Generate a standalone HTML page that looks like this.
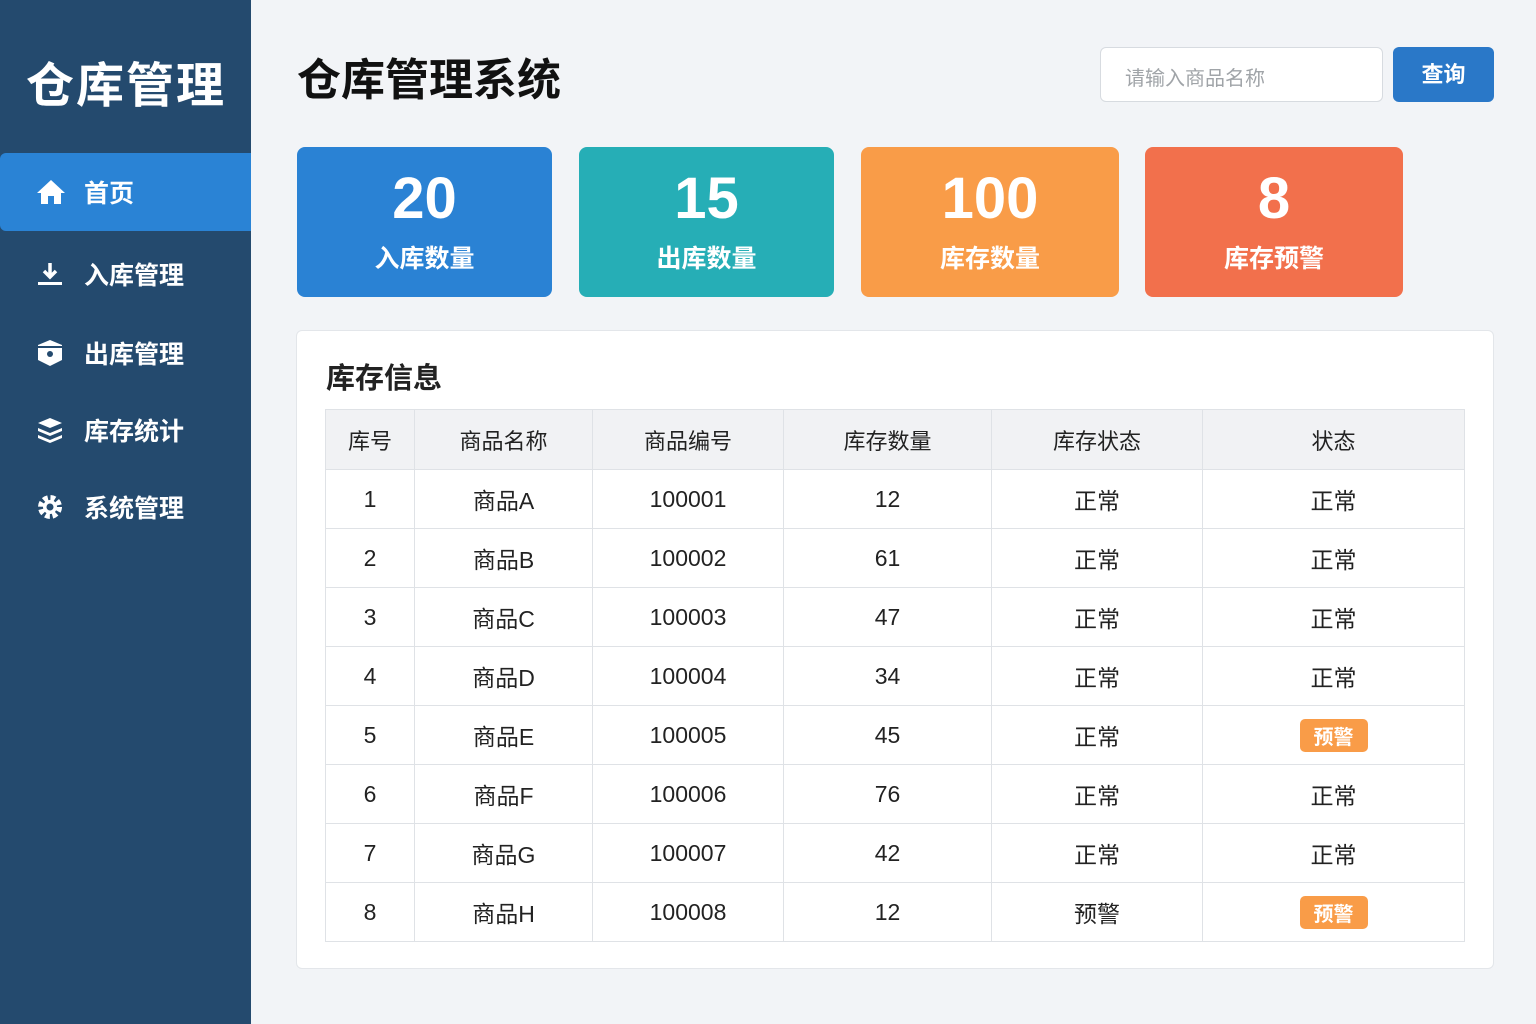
<!DOCTYPE html>
<html><head><meta charset="utf-8"><style>
*{margin:0;padding:0;box-sizing:border-box}
body{width:1536px;height:1024px;background:#f2f4f7;font-family:"Liberation Sans","Noto Sans CJK SC",sans-serif;position:relative;overflow:hidden;color:#222}
.side{position:absolute;left:0;top:0;width:251px;height:1024px;background:#244a6e}
.logo{position:absolute;left:26px;top:46px;font-size:48px;font-weight:bold;color:#fff;letter-spacing:2px}
.nav{position:absolute;left:0;width:251px;height:78px;display:flex;align-items:center;color:#fff;font-size:25px;font-weight:bold}
.nav svg{position:absolute;left:36px}
.nav span{position:absolute;left:84px}
.act{background:#2a83d5;border-radius:6px 0 0 6px}
h1{position:absolute;left:297px;top:44px;font-size:44px;font-weight:bold;color:#111}
.search{position:absolute;left:1100px;top:47px;width:283px;height:55px;background:#fff;border:1px solid #d7dbe0;border-radius:6px;color:#a0a4a8;font-size:20px;padding:14px 0 0 24px}
.btn{position:absolute;left:1393px;top:47px;width:101px;height:55px;background:#2a78c8;border-radius:6px;color:#fff;font-size:22px;font-weight:bold;text-align:center;line-height:55px}
.card{position:absolute;top:147px;height:150px;border-radius:8px;color:#fff;text-align:center}
.card b{display:block;font-size:58px;line-height:60px;margin-top:22px}
.card i{display:block;font-style:normal;font-size:25px;margin-top:10px;font-weight:bold}
.panel{position:absolute;left:296px;top:330px;width:1198px;height:639px;background:#fff;border:1px solid #e3e6ea;border-radius:6px}
.panel h2{position:absolute;left:29px;top:24px;font-size:29px;font-weight:bold}
table{position:absolute;left:325px;top:409px;border-collapse:collapse;font-size:23px}
td,th{border:1px solid #dfe2e6;text-align:center;height:59px;font-weight:normal}
th{background:#f1f2f4;height:60px;font-size:22px}
.tag{display:inline-block;background:#f99c48;color:#fff;border-radius:5px;padding:2px 14px;font-size:20px;font-weight:bold}
</style></head><body>
<div class="side">
<div class="logo">仓库管理</div>
<div class="nav act" style="top:153px"><svg width="30" height="28" viewBox="0 0 30 28"><path d="M15 2L1 15h4v11h7v-8h6v8h7V15h4z" fill="#fff"/></svg><span>首页</span></div>
<div class="nav" style="top:235px"><svg width="28" height="28" viewBox="0 0 28 28"><path d="M14 3v14M8 11l6 6 6-6" stroke="#fff" stroke-width="3.5" fill="none"/><rect x="2" y="22" width="24" height="3" fill="#fff"/></svg><span>入库管理</span></div>
<div class="nav" style="top:314px"><svg width="28" height="28" viewBox="0 0 28 28"><path d="M14 1L2 6v15l12 6 12-6V6z" fill="#fff"/><path d="M2 8h24" stroke="#244a6e" stroke-width="2"/><circle cx="14" cy="15" r="3" fill="#244a6e"/></svg><span>出库管理</span></div>
<div class="nav" style="top:391px"><svg width="28" height="28" viewBox="0 0 28 28"><path d="M14 2L2 7l12 5 12-5z M2 12l12 5 12-5v3l-12 5-12-5z M2 19l12 5 12-5v3l-12 5-12-5z" fill="#fff"/></svg><span>库存统计</span></div>
<div class="nav" style="top:468px"><svg width="28" height="28" viewBox="0 0 28 28"><circle cx="14" cy="14" r="9" fill="none" stroke="#fff" stroke-width="6" stroke-dasharray="4.5 2.6"/><circle cx="14" cy="14" r="7" fill="#fff"/><circle cx="14" cy="14" r="3.5" fill="#244a6e"/></svg><span>系统管理</span></div>
</div>
<h1>仓库管理系统</h1>
<div class="search">请输入商品名称</div>
<div class="btn">查询</div>
<div class="card" style="left:297px;width:255px;background:#2a82d4"><b>20</b><i>入库数量</i></div>
<div class="card" style="left:579px;width:255px;background:#26aeb6"><b>15</b><i>出库数量</i></div>
<div class="card" style="left:861px;width:258px;background:#f99c48"><b>100</b><i>库存数量</i></div>
<div class="card" style="left:1145px;width:258px;background:#f2704c"><b>8</b><i>库存预警</i></div>
<div class="panel"><h2>库存信息</h2></div>
<table>
<tr><th style="width:89px">库号</th><th style="width:178px">商品名称</th><th style="width:191px">商品编号</th><th style="width:208px">库存数量</th><th style="width:211px">库存状态</th><th style="width:262px">状态</th></tr>
<tr><td>1</td><td>商品A</td><td>100001</td><td>12</td><td>正常</td><td>正常</td></tr>
<tr><td>2</td><td>商品B</td><td>100002</td><td>61</td><td>正常</td><td>正常</td></tr>
<tr><td>3</td><td>商品C</td><td>100003</td><td>47</td><td>正常</td><td>正常</td></tr>
<tr><td>4</td><td>商品D</td><td>100004</td><td>34</td><td>正常</td><td>正常</td></tr>
<tr><td>5</td><td>商品E</td><td>100005</td><td>45</td><td>正常</td><td><span class="tag">预警</span></td></tr>
<tr><td>6</td><td>商品F</td><td>100006</td><td>76</td><td>正常</td><td>正常</td></tr>
<tr><td>7</td><td>商品G</td><td>100007</td><td>42</td><td>正常</td><td>正常</td></tr>
<tr><td>8</td><td>商品H</td><td>100008</td><td>12</td><td>预警</td><td><span class="tag">预警</span></td></tr>
</table>
</body></html>
